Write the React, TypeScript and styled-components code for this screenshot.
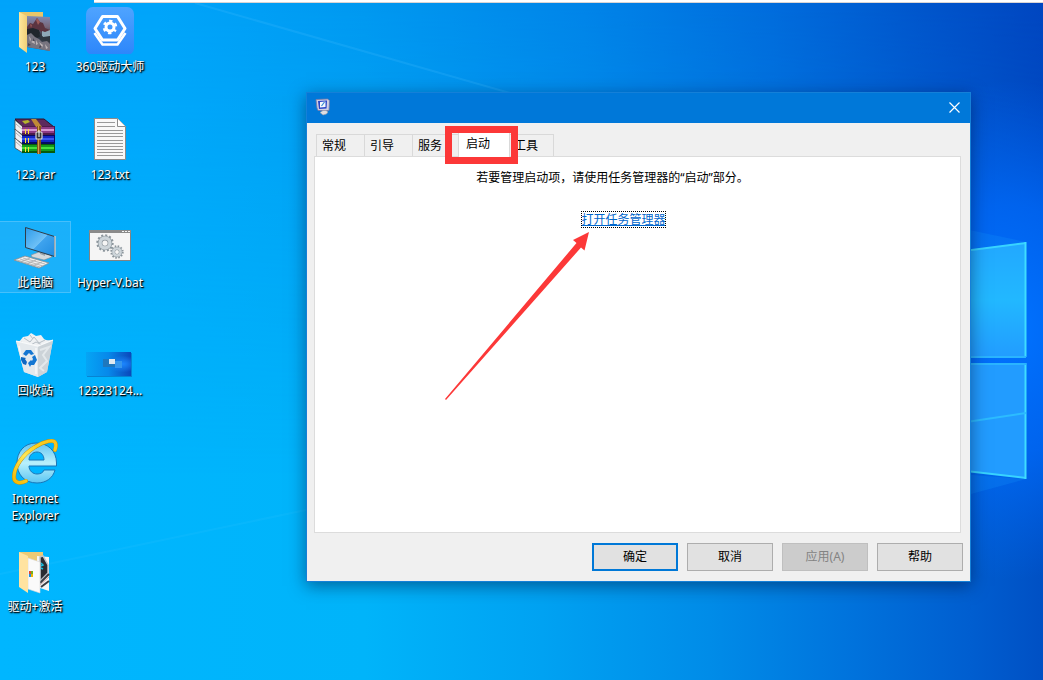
import React from "react";
import styled, { createGlobalStyle, css } from "styled-components";

const Global = createGlobalStyle`
  * { box-sizing: border-box; }
  body {
    margin: 0;
    font-family: "Noto Sans", "Noto Sans CJK SC", sans-serif;
    font-size: 12px;
    line-height: 18px;
    color: #000;
  }
`;

const Desktop = styled.main`
  position: relative;
  min-height: 100vh;
  overflow: hidden;
  background: #00a8f8;
`;

const Wallpaper = styled.svg`
  position: absolute;
  inset: 0;
  width: 100%;
  height: 100%;
`;

const TopStrip = styled.div`
  position: absolute;
  top: 0;
  left: 94px;
  right: 0;
  height: 3px;
  background: #fff;
  border-bottom: 1px solid #d9d4d4;
`;

const Shortcuts = styled.nav`
  position: relative;
  display: flex;
  gap: 5px;
  padding-top: 6px;
`;

const ShortcutColumn = styled.ul`
  display: grid;
  grid-auto-rows: 108px;
  align-items: start;
  width: 70px;
  margin: 0;
  padding: 0;
  list-style: none;
`;

const Shortcut = styled.button<{ $hot?: boolean }>`
  display: flex;
  flex-direction: column;
  align-items: center;
  gap: 4px;
  width: 100%;
  padding: 0 0 1px;
  border: 0;
  background: none;
  color: #fff;
  font: inherit;
  line-height: 17px;
  white-space: nowrap;
  text-shadow: 1px 1px 1px #000, 1px 1px 2px #000;
  ${(p) =>
    p.$hot &&
    css`
      background: rgba(120, 190, 245, 0.22);
      box-shadow: 0 0 0 1px rgba(140, 210, 250, 0.5);
    `}
`;

const Caption = styled.span`
  white-space: pre-line;
`;

const Dialog = styled.section`
  position: absolute;
  top: 92px;
  left: 306px;
  right: 72px;
  min-width: 480px;
  border: 1px solid #1580d8;
  background: #f0f0f0;
  box-shadow: 0 4px 16px rgba(0, 20, 60, 0.5);
`;

const TitleBar = styled.header`
  display: flex;
  align-items: center;
  justify-content: space-between;
  height: 30px;
  padding: 0 10px 2px 8px;
  background: #0078d9;
`;

const CloseButton = styled.button`
  display: flex;
  padding: 0;
  border: 0;
  background: none;
`;

const Content = styled.div`
  padding: 11px 9px 0 7px;
`;

const TabList = styled.div`
  display: flex;
  height: 22px;
  padding-left: 2px;
`;

const Tab = styled.button<{ $active?: boolean }>`
  width: 48px;
  padding: 0 0 0 5px;
  border: 1px solid #d9d9d9;
  border-width: 1px 0 0 1px;
  background: #f0f0f0;
  color: #000;
  font: inherit;
  text-align: left;
  &:last-child {
    width: 46px;
    border-right-width: 1px;
  }
  ${(p) =>
    p.$active &&
    css`
      position: relative;
      width: 52px;
      height: 25px;
      margin: -2px -2px 0;
      padding: 0 0 3px 7px;
      border-right-width: 1px;
      background: #fff;
    `}
`;

const TabPanel = styled.div`
  display: flex;
  flex-direction: column;
  align-items: center;
  gap: 24px;
  min-height: 377px;
  padding: 12px 28px 12px 0;
  border: 1px solid #dcdcdc;
  background: #fff;
`;

const Message = styled.p`
  margin: 0 22px 0 0;
`;

const TaskLink = styled.a`
  outline: 1px dotted #000;
  outline-offset: -1px;
  color: #0066cc;
  line-height: 17px;
`;

const Actions = styled.footer`
  display: flex;
  justify-content: flex-end;
  gap: 9px;
  padding: 10px 7px 10px;
`;

const ActionButton = styled.button<{ $primary?: boolean }>`
  width: 86px;
  height: 28px;
  padding: 0;
  border: ${(p) => (p.$primary ? "2px solid #0078d7" : "1px solid #adadad")};
  background: #e1e1e1;
  color: #000;
  font: inherit;
  &:disabled {
    border-color: #bfbfbf;
    background: #ccc;
    color: #838383;
  }
`;

const Highlight = styled.div`
  position: absolute;
  top: 33px;
  left: 138px;
  width: 73px;
  height: 38px;
  border: 7px solid #fc3838;
  pointer-events: none;
`;

const Arrow = styled.svg`
  position: absolute;
  top: 139px;
  left: 138px;
  pointer-events: none;
`;

const Icon = ({ children }: { children: React.ReactNode }) => (
  <svg width="48" height="48" viewBox="0 0 48 48" aria-hidden="true">
    {children}
  </svg>
);

const PhotoFolder = () => (
  <Icon>
    <defs>
      <linearGradient id="photo" x1="0" y1="0" x2="0" y2="1">
        <stop offset="0" stopColor="#7f8bb4" />
        <stop offset="0.3" stopColor="#77687c" />
        <stop offset="0.6" stopColor="#2b3440" />
        <stop offset="1" stopColor="#4f5468" />
      </linearGradient>
      <linearGradient id="flap" x1="0" y1="0" x2="1" y2="0">
        <stop offset="0" stopColor="#ffe89c" />
        <stop offset="1" stopColor="#f0d078" />
      </linearGradient>
    </defs>
    <path d="M8 6H32V36H8z" fill="#e8c66a" />
    <path d="M16 10 39 11V45L16 41z" fill="url(#photo)" />
    <path d="M16 21l3-4 3 1 4-6 3 4 3 1 2 5 5 2v4l-7-1-4-3-6 2-6 1z" fill="#5b3440" />
    <path d="M25 14l1-2 3 4-2 3zM19 18l2 1-1 3z" fill="#9c5a58" />
    <path d="M31 25l3 1 5-2v6l-5 3-3-3z" fill="#8faab8" />
    <path d="M16 23l6-1 6 2 2 6-6 3-8-2z" fill="#20262c" />
    <path d="M28 27l4 4 7-1v6l-9-2z" fill="#2e3840" />
    <path d="M16 29l4-2 4 4 4 2 3 3 5-1 3 3v7l-23-4z" fill="#77747f" />
    <path d="M18 30l2 3-1 3zM20 36l3-2 1 4zM28 36l4 3-1 3zM34 38l3 4-2 1zM25 34l2 4-2 1z" fill="#bdb4b6" />
    <path d="M22 32l2 3-2 0zM29 39l2 2-3 1zM17 37l3 2-3 1z" fill="#4a4854" />
    <path d="M8 6l8 4V47L8 41z" fill="url(#flap)" />
  </Icon>
);

const DriverIcon = () => (
  <Icon>
    <defs>
      <linearGradient id="drv" x1="0" y1="0" x2="0" y2="1">
        <stop offset="0" stopColor="#4fa4ff" />
        <stop offset="1" stopColor="#2c86fb" />
      </linearGradient>
    </defs>
    <rect y="1" width="48" height="48" rx="7" fill="url(#drv)" />
    <path d="M16.500 10.500H31.500L39 22.500 31.500 34H16.500L9 22.500z" fill="none" stroke="#fff" strokeWidth="3" strokeLinejoin="round" />
    <path d="M8.500 27l8 11.500h15l8-11.500" fill="none" stroke="#fff" strokeWidth="2.500" strokeLinejoin="round" />
    <circle cx="24" cy="21" r="4" fill="none" stroke="#fff" strokeWidth="3" />
    <circle cx="24" cy="21" r="6" fill="none" stroke="#fff" strokeWidth="2.600" strokeDasharray="3.100 3.183" strokeDashoffset="1.500" transform="rotate(30 24 21)" />
  </Icon>
);

const books = [
  { y: 12, top: "#d795d0", mid: "#8d3c86", low: "#4d1b4b" },
  { y: 21, top: "#3a58f0", mid: "#1426c4", low: "#060c60" },
  { y: 30, top: "#45e03c", mid: "#149a1c", low: "#075a0c" },
];

const RarIcon = () => (
  <Icon>
    <path d="M4 5h29l10 8H12z" fill="#5d2a5c" stroke="#2d122d" strokeWidth="1" />
    {books.map((b) => (
      <g key={b.y}>
        <path d={`M4 ${b.y - 6}l8 7v8l-8-5z`} fill="#f0f0f4" stroke="#444" strokeWidth="0.800" />
        <path d={`M5 ${b.y - 2}l7 6`} stroke="#888" strokeWidth="0.600" />
        <rect x="11" y={b.y} width="33" height="9" fill={b.low} />
        <rect x="11" y={b.y + 1} width="32" height="6" fill={b.mid} />
        <rect x="11" y={b.y + 3} width="32" height="2" fill={b.top} />
        <path d={`M14.500 ${b.y + 3}v5M17.500 ${b.y + 3}v5`} stroke="#ffe03a" />
      </g>
    ))}
    <path d="M20 5h5l6 8h-6z" fill="#c08a35" />
    <path d="M26 12h4v28h-4z" fill="#8a5617" />
    <path d="M27 12h1v28h-1z" fill="#d39b4a" />
    <path d="M11 7l6-1 2 2-5 2z" fill="#b5b32d" />
    <rect x="25" y="18" width="6" height="7" rx="1" fill="#333" stroke="#d6d6d6" strokeWidth="1.200" />
    <path d="M28 16v7" stroke="#fff" />
  </Icon>
);

const TextIcon = () => (
  <Icon>
    <path d="M8.500 4.500h23l8 8v33h-31z" fill="#f8f8f8" stroke="#8b8b8b" />
    <path d="M31.500 4.500v8h8" fill="#fff" stroke="#8b8b8b" />
    <path
      d="M11 8.500h18M11 12.500h18M11 16.500h26M11 19.500h26M11 22.500h26M11 26.500h26M11 29.500h26M11 32.500h26M11 35.500h26M11 38.500h26M11 41.500h26"
      stroke="#999"
    />
  </Icon>
);

const ComputerIcon = () => (
  <Icon>
    <defs>
      <linearGradient id="scr" x1="0" y1="0" x2="1" y2="1">
        <stop offset="0" stopColor="#2b9bea" />
        <stop offset="0.500" stopColor="#6ec0f6" />
        <stop offset="0.520" stopColor="#3ea3ee" />
        <stop offset="1" stopColor="#208ce0" />
      </linearGradient>
    </defs>
    <path d="M20 33l8-3 11 3 2 2-8 3-12-3z" fill="#d5d9dc" stroke="#7f8890" strokeWidth="0.600" />
    <path d="M29 28l5 2v4l-5-2z" fill="#9aa2a8" />
    <path d="M14.500 5.500l29 9v20l-29-9z" fill="url(#scr)" stroke="#2f3d4a" />
    <path d="M44 14v21" stroke="#c3cbd1" strokeWidth="1.500" />
    <path d="M3 38l11-4 24 7-10 5z" fill="#f0f0f0" stroke="#8c8c8c" strokeWidth="0.800" />
    <path d="M6 38l23 7M9 37l23 7M12 36l22 6M9 40l10-4M15 42l10-4M21 44l10-4" stroke="#a9a9a9" strokeWidth="0.800" />
  </Icon>
);

const Gear = ({ cx, cy, r }: { cx: number; cy: number; r: number }) => (
  <g fill="none">
    <circle cx={cx} cy={cy} r={r} stroke="#8b959c" strokeWidth="2.400" strokeDasharray={`${(r * Math.PI) / 12} ${(r * Math.PI) / 12}`} />
    <circle cx={cx} cy={cy} r={r * 0.66} stroke="#8b959c" strokeWidth={r * 0.62} />
    <circle cx={cx} cy={cy} r={r * 0.66} stroke="#cdd5da" strokeWidth={r * 0.45} />
  </g>
);

const BatchIcon = () => (
  <Icon>
    <rect x="3.500" y="8.500" width="41" height="30" fill="#f5f5f5" stroke="#838383" />
    <path d="M3 8h42v3H3z" fill="#8b8b8b" />
    <path d="M36 9.500h2M39 9.500h2M42 9.500h2" stroke="#f5f5f5" />
    <Gear cx={19} cy={21} r={7.500} />
    <Gear cx={31} cy={30} r={5.500} />
  </Icon>
);

const BinIcon = () => (
  <Icon>
    <path d="M5 11l37-1-6 32-9 5-14-5z" fill="#d9dfe4" />
    <path d="M8 12l4-5 5-1 3-3 5 3 5-1 3 4 6 3-11 6-14-1z" fill="#eff1f3" />
    <path d="M13 8l6 4 4-5 5 6 6-3M10 12l8 4 7-4 8 4M19 5l3 4" fill="none" stroke="#b6bec5" />
    <path d="M5 11l8 31 14 5V16z" fill="#e4e9ed" />
    <path d="M27 16l15-6-6 32-9 5z" fill="#ccd3d8" />
    <path d="M29 20l9-3-6 8 4 6-7 7 4 3" fill="none" stroke="#e3e8eb" strokeWidth="2" />
    <path d="M8 16l4 18M25 18v26" fill="none" stroke="#f6f8f9" strokeWidth="1.500" />
    <path d="M5 11l22 5 15-6" fill="none" stroke="#f8fafb" strokeWidth="1.200" />
    <path d="M12 24l3-4h5l3 4-3 1-2-2-3 3z" fill="#1476d2" />
    <path d="M21 27l3-2 2 5-3 5h-3l-1 2-2-4 3-3 1 1 1-2z" fill="#1476d2" />
    <path d="M10 27l5 1-1 1 2 3-1 3-3-1-2-4z" fill="#0f68c2" />
  </Icon>
);

const ThumbnailIcon = () => (
  <Icon>
    <defs>
      <linearGradient id="thumb" x1="0" y1="0" x2="1" y2="0">
        <stop offset="0" stopColor="#05a5f5" />
        <stop offset="0.500" stopColor="#0788ea" />
        <stop offset="1" stopColor="#0b48bb" />
      </linearGradient>
      <radialGradient id="thumbGlow" cx="0.820" cy="0.500" r="0.350">
        <stop offset="0" stopColor="#1c86ff" />
        <stop offset="1" stopColor="#1c86ff" stopOpacity="0" />
      </radialGradient>
    </defs>
    <rect x="1" y="23" width="45" height="24" fill="#0b55a8" opacity="0.500" />
    <rect x="0" y="22" width="45" height="24" fill="url(#thumb)" />
    <rect x="0" y="22" width="45" height="24" fill="url(#thumbGlow)" />
    <rect x="17" y="29" width="13" height="8" fill="#1f78bd" />
    <rect x="29" y="31" width="7" height="7" fill="#3697ee" />
    <rect x="23" y="29" width="6" height="5" fill="#e0e9f0" />
  </Icon>
);

const ringPath = "M15 43C9 46 3 45 3 39C3 29 12 16 24 9C33 3 43 1 44.500 5C45.300 7 45 9 44 12";

const ExplorerIcon = () => (
  <Icon>
    <defs>
      <linearGradient id="ie" x1="0" y1="0" x2="0" y2="1">
        <stop offset="0" stopColor="#62c4f2" />
        <stop offset="0.500" stopColor="#b8f0fc" />
        <stop offset="1" stopColor="#5cc6f3" />
      </linearGradient>
      <linearGradient id="ring" x1="0" y1="1" x2="1" y2="0">
        <stop offset="0" stopColor="#f5b800" />
        <stop offset="0.450" stopColor="#ffe75a" />
        <stop offset="0.700" stopColor="#fbd020" />
        <stop offset="1" stopColor="#f7c21c" />
      </linearGradient>
    </defs>
    <path
      fillRule="evenodd"
      d="M25 5C37 5 45.500 13 45.500 25v3H18c0 5 4 8 8 8 3 0 6-1 7-4h11c-2 8-9 13-18 13C13 45 6 36 6 25S13 5 25 5zM18 22h15c0-5-3-8-7-8s-8 3-8 8z"
      fill="url(#ie)"
      stroke="#1976b8"
      strokeWidth="1"
    />
    <path d={ringPath} fill="none" stroke="#b98a10" strokeWidth="4" strokeLinecap="round" />
    <path d={ringPath} fill="none" stroke="url(#ring)" strokeWidth="3.200" strokeLinecap="round" />
  </Icon>
);

const DriverFolder = () => (
  <Icon>
    <path d="M8 6H32V38H8z" fill="#edca75" />
    <path d="M26 10l12 1v34l-12-4z" fill="#f5f5f5" />
    <path d="M29 11l3-1 5 9v8l-8 8z" fill="#2a2c32" stroke="#bfc3ca" strokeWidth="1.500" />
    <path d="M30 17l2 2-2 1M30 22l2 1" fill="none" stroke="#18bfe0" strokeWidth="1.500" />
    <path d="M38 28l-9 9M38 35l-8 6" stroke="#3b3d44" strokeWidth="2" />
    <path d="M38 31l-9 8" stroke="#c9a0a0" strokeWidth="1" />
    <path d="M17 12l12 4v31l-12-4z" fill="#fafafa" stroke="#d7d7d7" strokeWidth="0.600" />
    <path d="M18 25h2v3h-2z" fill="#e8472a" />
    <path d="M20 25h2v3h-2z" fill="#73b31b" />
    <path d="M18 28h2v3h-2z" fill="#1a8fe0" />
    <path d="M20 28h2v3h-2z" fill="#f5b400" />
    <path d="M8 6l9 4v37l-9-6z" fill="#ffe3a0" />
  </Icon>
);

const ConfigIcon = () => (
  <svg width="16" height="18" viewBox="0 0 16 18" aria-hidden="true">
    <path d="M1 1.500l11.500-.5 2 1.500-.5 10L3 12.500 2 10z" fill="#cfcfe4" stroke="#7777a4" strokeWidth="0.800" />
    <path d="M3 3l9-.5-.5 8L4 11z" fill="#2744c8" />
    <path d="M5 4l5.500-.5v5.500L5 9.500z" fill="#f4f8ff" />
    <path d="M6.500 8l3-4" stroke="#3a8fd0" strokeWidth="1.200" />
    <path d="M5 14.500l3-2h3l2 1.500-1.500 2-3.500 1z" fill="#dedee2" stroke="#9a9aa4" strokeWidth="0.600" />
  </svg>
);

type Item = { name: string; icon: React.ReactNode; hot?: boolean };

const columns: Item[][] = [
  [
    { name: "123", icon: <PhotoFolder /> },
    { name: "123.rar", icon: <RarIcon /> },
    { name: "此电脑", icon: <ComputerIcon />, hot: true },
    { name: "回收站", icon: <BinIcon /> },
    { name: "Internet\nExplorer", icon: <ExplorerIcon /> },
    { name: "驱动+激活", icon: <DriverFolder /> },
  ],
  [
    { name: "360驱动大师", icon: <DriverIcon /> },
    { name: "123.txt", icon: <TextIcon /> },
    { name: "Hyper-V.bat", icon: <BatchIcon /> },
    { name: "12323124...", icon: <ThumbnailIcon /> },
  ],
];

const tabs = ["常规", "引导", "服务", "启动", "工具"];

export default function App() {
  return (
    <>
      <Global />
      <Desktop>
        <Wallpaper viewBox="0 0 1043 680" preserveAspectRatio="none" aria-hidden="true">
          <defs>
            <linearGradient id="skyTop">
              <stop offset="0" stopColor="#00a3fa" />
              <stop offset="0.150" stopColor="#00a4fa" />
              <stop offset="0.350" stopColor="#0098f0" />
              <stop offset="0.560" stopColor="#0084e8" />
              <stop offset="0.740" stopColor="#006cdc" />
              <stop offset="0.880" stopColor="#0056cc" />
              <stop offset="1" stopColor="#0046c0" />
            </linearGradient>
            <linearGradient id="skyBottom">
              <stop offset="0" stopColor="#00b6ff" />
              <stop offset="0.350" stopColor="#00b4fa" />
              <stop offset="0.520" stopColor="#00a2f2" />
              <stop offset="0.680" stopColor="#008ce8" />
              <stop offset="0.820" stopColor="#0072dc" />
              <stop offset="0.930" stopColor="#005ed0" />
              <stop offset="1" stopColor="#0050c4" />
            </linearGradient>
            <linearGradient id="fade" x1="0" y1="0" x2="0" y2="1">
              <stop offset="0" stopColor="#fff" />
              <stop offset="0.700" stopColor="#000" />
            </linearGradient>
            <mask id="fadeDown">
              <rect width="1043" height="680" fill="url(#fade)" />
            </mask>
            <radialGradient id="glow">
              <stop offset="0" stopColor="#0072ff" />
              <stop offset="0.500" stopColor="#006cff" stopOpacity="0.700" />
              <stop offset="1" stopColor="#0068f8" stopOpacity="0" />
            </radialGradient>
            <linearGradient id="pane" x1="0" y1="0" x2="0" y2="1">
              <stop offset="0" stopColor="#22a8ff" />
              <stop offset="0.500" stopColor="#22b8ff" />
              <stop offset="1" stopColor="#229cff" />
            </linearGradient>
          </defs>
          <rect width="1043" height="680" fill="url(#skyBottom)" />
          <rect width="1043" height="680" fill="url(#skyTop)" mask="url(#fadeDown)" />
          <ellipse cx="1010" cy="330" rx="190" ry="250" fill="url(#glow)" />
          <path d="M195 3 510 93" stroke="#4dc0ff" strokeWidth="2" opacity="0.200" />
          <path d="M0 574 306 510" stroke="#6ad2ff" strokeWidth="2" opacity="0.080" />
          <path d="M960 228l66 14-66 8zM960 474l66 5-66 18z" fill="#18a0ff" opacity="0.200" />
          <path d="M940 254 1026 243V357H940z" fill="url(#pane)" />
          <path d="M940 364H1026V478L940 468z" fill="#229cff" />
          <path d="M940 254 1026 243M940 468 1026 478" stroke="#38d4ff" strokeWidth="2" />
          <path d="M1025.500 242V357M1025.500 363V479" stroke="#3fdcff" strokeWidth="2" />
          <path d="M940 357H1026M940 364H1026" stroke="#2ab4ff" strokeWidth="2" />
          <path d="M940 426 1026 413" stroke="#2cbcff" strokeWidth="2" />
        </Wallpaper>
        <TopStrip />
        <Shortcuts aria-label="桌面">
          {columns.map((items, i) => (
            <ShortcutColumn key={i}>
              {items.map((item) => (
                <li key={item.name}>
                  <Shortcut type="button" $hot={item.hot}>
                    {item.icon}
                    <Caption>{item.name}</Caption>
                  </Shortcut>
                </li>
              ))}
            </ShortcutColumn>
          ))}
        </Shortcuts>
        <Dialog role="dialog" aria-label="系统配置">
          <TitleBar>
            <ConfigIcon />
            <CloseButton type="button" aria-label="关闭">
              <svg width="11" height="11" viewBox="0 0 11 11" stroke="#fff" strokeWidth="1.200">
                <path d="M0.500 0.500l10 10M10.500 0.500l-10 10" />
              </svg>
            </CloseButton>
          </TitleBar>
          <Content>
            <TabList role="tablist">
              {tabs.map((tab) => (
                <Tab key={tab} type="button" role="tab" aria-selected={tab === "启动"} $active={tab === "启动"}>
                  {tab}
                </Tab>
              ))}
            </TabList>
            <TabPanel role="tabpanel">
              <Message>若要管理启动项，请使用任务管理器的“启动”部分。</Message>
              <TaskLink href="#taskmgr">打开任务管理器</TaskLink>
            </TabPanel>
          </Content>
          <Actions>
            <ActionButton type="button" $primary>
              确定
            </ActionButton>
            <ActionButton type="button">取消</ActionButton>
            <ActionButton type="button" disabled>
              应用(A)
            </ActionButton>
            <ActionButton type="button">帮助</ActionButton>
          </Actions>
          <Highlight />
          <Arrow width="146" height="170" viewBox="0 0 146 170" aria-hidden="true">
            <path d="M144 0 128 8l3.500 3L0 167l1 1L136 15.500l3.500 3z" fill="#fc3838" />
          </Arrow>
        </Dialog>
      </Desktop>
    </>
  );
}
